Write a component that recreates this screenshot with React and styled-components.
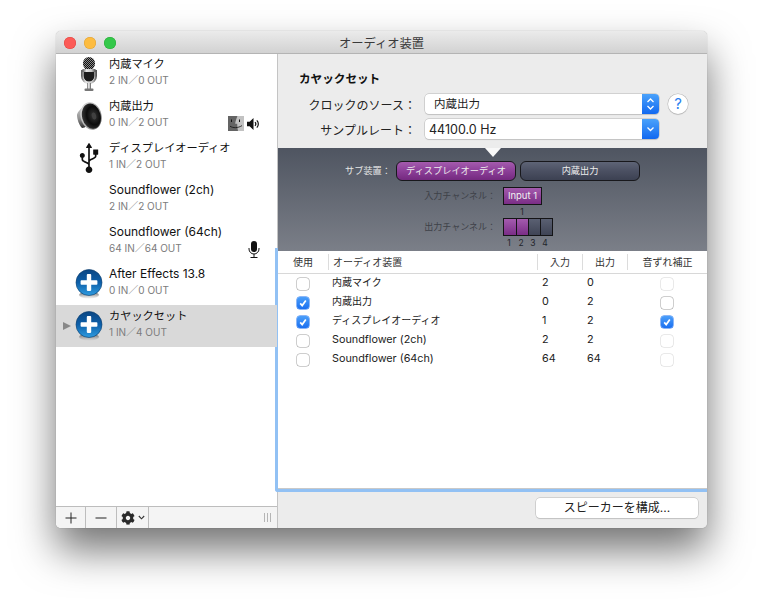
import React from 'react'
import styled, { createGlobalStyle } from 'styled-components'
import { FaCog, FaUsb } from 'react-icons/fa'

const FONT = `Inter, "Noto Sans CJK JP", sans-serif`

const GlobalStyle = createGlobalStyle`
    html, body {
        margin: 0;
        padding: 0;
        background: #fff;
    }
    body {
        font-family: ${FONT};
        font-size: 11px;
        color: #222;
    }
`

const devices = [
    { name: '内蔵マイク', io: '2 IN／0 OUT', icon: 'mic' },
    { name: '内蔵出力', io: '0 IN／2 OUT', icon: 'speaker', badges: 'output' },
    { name: 'ディスプレイオーディオ', io: '1 IN／2 OUT', icon: 'usb' },
    { name: 'Soundflower (2ch)', io: '2 IN／2 OUT' },
    { name: 'Soundflower (64ch)', io: '64 IN／64 OUT', badges: 'mic' },
    { name: 'After Effects 13.8', io: '0 IN／0 OUT', icon: 'plus' },
    { name: 'カヤックセット', io: '1 IN／4 OUT', icon: 'plus', selected: true }
]

const tableRows = [
    { name: '内蔵マイク', input: 2, output: 0, use: false, drift: false, driftDim: true },
    { name: '内蔵出力', input: 0, output: 2, use: true, drift: false },
    { name: 'ディスプレイオーディオ', input: 1, output: 2, use: true, drift: true },
    { name: 'Soundflower (2ch)', input: 2, output: 2, use: false, drift: false, driftDim: true },
    { name: 'Soundflower (64ch)', input: 64, output: 64, use: false, drift: false, driftDim: true }
]

// japanese glyphs run smaller than the latin ones in the original
const isCjk = text => /[^\x00-\x7f]/.test(text)

const MicIcon = () => (
    <svg width="18" height="35" viewBox="0 0 18 35">
        <defs>
            <linearGradient id="micBody" x1="0" x2="1" y1="0" y2="0">
                <stop offset="0" stopColor="#555" />
                <stop offset=".3" stopColor="#e6e6e6" />
                <stop offset=".7" stopColor="#c4c4c4" />
                <stop offset="1" stopColor="#4a4a4a" />
            </linearGradient>
            <pattern id="micMesh" width="2" height="2" patternUnits="userSpaceOnUse">
                <rect width="2" height="2" fill="#8c8c8c" />
                <rect width="1" height="1" fill="#111" />
                <rect x="1" y="1" width="1" height="1" fill="#111" />
            </pattern>
        </defs>
        <path d="M1 13v6a8 8 0 0 0 16 0v-6h-2v6a6 6 0 0 1-12 0v-6z" fill="url(#micBody)" />
        <rect x="3" y="0" width="12" height="13" rx="6" fill="url(#micMesh)" />
        <rect x="2.5" y="12" width="13" height="3" fill="url(#micBody)" />
        <path d="M3.5 15h11v4a5.5 5.5 0 0 1-11 0z" fill="#1c1c1c" />
        <rect x="7" y="26" width="4" height="7" fill="url(#micBody)" />
        <rect x="4.5" y="31.5" width="9" height="2.5" rx="1" fill="#777" />
    </svg>
)

const SpeakerIcon = () => (
    <svg width="27" height="29" viewBox="0 0 27 29">
        <defs>
            <radialGradient id="cone" cx=".62" cy=".5" r=".6">
                <stop offset="0" stopColor="#4a4a4a" />
                <stop offset=".18" stopColor="#2a2a2a" />
                <stop offset=".6" stopColor="#0c0c0c" />
                <stop offset="1" stopColor="#333" />
            </radialGradient>
            <linearGradient id="rim" x1="0" x2="1" y1="0" y2="1">
                <stop offset="0" stopColor="#e6e6e6" />
                <stop offset=".55" stopColor="#a8a8a8" />
                <stop offset="1" stopColor="#5a5a5a" />
            </linearGradient>
            <linearGradient id="back" x1="0" x2="0" y1="0" y2="1">
                <stop offset="0" stopColor="#cfcfcf" />
                <stop offset=".6" stopColor="#8d8d8d" />
                <stop offset="1" stopColor="#2f2f2f" />
            </linearGradient>
        </defs>
        <path d="M1 13c0-2 3-6 7-9l3 20c-2 1-3 2-5 2-3-3-5-9-5-13z" fill="url(#back)" />
        <ellipse cx="15" cy="14" rx="10.5" ry="14" fill="url(#rim)" transform="rotate(-14 15 14)" />
        <ellipse cx="15.4" cy="14.2" rx="9.3" ry="12.8" fill="url(#cone)" transform="rotate(-14 15.4 14.2)" />
        <ellipse cx="18" cy="14" rx="2.2" ry="3.6" fill="#404040" transform="rotate(-14 18 14)" />
    </svg>
)

const PlusIcon = () => (
    <svg width="28" height="30" viewBox="0 0 28 30">
        <defs>
            <linearGradient id="ball" x1="0" x2="0" y1="0" y2="1">
                <stop offset="0" stopColor="#0b4683" />
                <stop offset=".5" stopColor="#0d5fa9" />
                <stop offset="1" stopColor="#2f9ce0" />
            </linearGradient>
            <linearGradient id="ballShadow" x1="0" x2="0" y1="0" y2="1">
                <stop offset="0" stopColor="#444" />
                <stop offset="1" stopColor="#bbb" stopOpacity=".2" />
            </linearGradient>
        </defs>
        <ellipse cx="14" cy="26" rx="10" ry="3.5" fill="url(#ballShadow)" />
        <circle cx="14" cy="13.5" r="13" fill="url(#ball)" stroke="#0a3a69" strokeWidth=".6" />
        <rect x="5.6" y="11.3" width="16.8" height="4.4" rx=".8" fill="#fff" />
        <rect x="11.8" y="5.1" width="4.4" height="16.8" rx=".8" fill="#fff" />
    </svg>
)

const FinderBadge = () => (
    <svg width="16" height="15" viewBox="0 0 16 15">
        <rect width="16" height="15" fill="#c2c2c2" />
        <path d="M0 0h9.4C8.2 3 7.4 5.5 7.2 7.8h2c0 2.6.3 5 .8 7.2H0z" fill="#646464" />
        <path d="M3.5 3.5V6M11.5 3.5V6" stroke="#111" />
        <path d="M2 10.2c3 2 8 2 12-.6" stroke="#111" strokeWidth=".8" fill="none" />
    </svg>
)

const VolumeBadge = () => (
    <svg width="15" height="14" viewBox="0 0 15 14">
        <path d="M1 4.8h2.6L7.5 1v12L3.6 9.2H1z" fill="#111" />
        <path d="M9 5.2a2.6 2.6 0 0 1 0 3.6M10.8 3.4a5 5 0 0 1 0 7.2" stroke="#111" strokeWidth="1.2" fill="none" />
    </svg>
)

const SmallMic = () => (
    <svg width="12" height="17" viewBox="0 0 12 17">
        <rect x="3" y="0" width="6" height="11" rx="3" fill="#111" />
        <path d="M1 7v1a5 5 0 0 0 10 0V7" stroke="#111" fill="none" />
        <path d="M6 13v3M2.5 16.5h7" stroke="#111" />
    </svg>
)

const renderDeviceIcon = icon => {
    if (icon === 'mic') return <MicIcon />
    if (icon === 'speaker') return <SpeakerIcon />
    if (icon === 'usb') return <UsbGlyph />
    if (icon === 'plus') return <PlusIcon />
    return null
}

const Check = ({ checked, dim }) => (
    <CheckBox $checked={checked} $dim={dim}>
        {checked && (
            <svg width="10" height="10" viewBox="0 0 10 10">
                <path d="M2.2 5.4 4.2 7.6 7.8 2.4" stroke="#fff" strokeWidth="1.7" fill="none" />
            </svg>
        )}
    </CheckBox>
)

const Select = ({ children, stepper }) => (
    <SelectBox>
        <SelectValue $stepper={stepper}>{children}</SelectValue>
        <SelectArrow>
            {stepper ? (
                <svg width="9" height="14" viewBox="0 0 9 14">
                    <path d="M1.5 5 4.5 2l3 3M1.5 9l3 3 3-3" stroke="#fff" strokeWidth="1.3" fill="none" />
                </svg>
            ) : (
                <svg width="9" height="6" viewBox="0 0 9 6">
                    <path d="M1.5 1.5 4.5 4.5l3-3" stroke="#fff" strokeWidth="1.3" fill="none" />
                </svg>
            )}
        </SelectArrow>
    </SelectBox>
)

export default function App() {
    return (
        <Page>
            <GlobalStyle />
            <Window>
                <TitleBar>
                    <Lights>
                        <Light $color="#fc5b57" $edge="#e0443e" />
                        <Light $color="#fdbc40" $edge="#dea034" />
                        <Light $color="#34c84a" $edge="#27aa35" />
                    </Lights>
                    オーディオ装置
                </TitleBar>
                <Body>
                    <Sidebar>
                        <DeviceList>
                            {devices.map(device => (
                                <DeviceRow key={device.name} $selected={device.selected}>
                                    <Disclosure $visible={device.selected} />
                                    <DeviceIcon>{renderDeviceIcon(device.icon)}</DeviceIcon>
                                    <DeviceText>
                                        <DeviceName $cjk={isCjk(device.name)}>{device.name}</DeviceName>
                                        <DeviceIo>{device.io}</DeviceIo>
                                    </DeviceText>
                                    {device.badges === 'output' && (
                                        <Badges>
                                            <FinderBadge />
                                            <VolumeBadge />
                                        </Badges>
                                    )}
                                    {device.badges === 'mic' && (
                                        <MicBadge>
                                            <SmallMic />
                                        </MicBadge>
                                    )}
                                </DeviceRow>
                            ))}
                        </DeviceList>
                        <SideToolbar>
                            <ToolButton $width={30}>
                                <svg width="12" height="12" viewBox="0 0 12 12">
                                    <path d="M6 .5v11M.5 6h11" stroke="#222" />
                                </svg>
                            </ToolButton>
                            <ToolButton $width={31}>
                                <svg width="12" height="12" viewBox="0 0 12 12">
                                    <path d="M.5 6h11" stroke="#222" />
                                </svg>
                            </ToolButton>
                            <ToolButton $width={32}>
                                <FaCog size={14} color="#2a2a2a" />
                                <svg width="7" height="5" viewBox="0 0 7 5">
                                    <path d="M.8 1 3.5 3.8 6.2 1" stroke="#333" strokeWidth="1.1" fill="none" />
                                </svg>
                            </ToolButton>
                            <Grip>
                                <i /><i /><i />
                            </Grip>
                        </SideToolbar>
                    </Sidebar>
                    <Main>
                        <Settings>
                            <SettingsTitle>カヤックセット</SettingsTitle>
                            <SettingRow>
                                <SettingLabel>クロックのソース：</SettingLabel>
                                <Select stepper>内蔵出力</Select>
                                <HelpButton>?</HelpButton>
                            </SettingRow>
                            <SettingRow>
                                <SettingLabel>サンプルレート：</SettingLabel>
                                <Select>44100.0 Hz</Select>
                            </SettingRow>
                        </Settings>
                        <SubPanel>
                            <Notch />
                            <SubRow>
                                <SubLabel $bright $width={113}>サブ装置：</SubLabel>
                                <Segment $active>ディスプレイオーディオ</Segment>
                                <Segment>内蔵出力</Segment>
                            </SubRow>
                            <ChannelRow $top={6}>
                                <SubLabel $width={218}>入力チャンネル：</SubLabel>
                                <ChannelBox>
                                    <ChannelCell $active $width={37}>Input 1</ChannelCell>
                                </ChannelBox>
                            </ChannelRow>
                            <ChannelNumbers $offset={13}>
                                <span>1</span>
                            </ChannelNumbers>
                            <ChannelRow $top={0}>
                                <SubLabel $width={218}>出力チャンネル：</SubLabel>
                                <ChannelBox>
                                    <ChannelCell $active $width={12} />
                                    <ChannelCell $active $width={12} />
                                    <ChannelCell $width={12} />
                                    <ChannelCell $width={12} />
                                </ChannelBox>
                            </ChannelRow>
                            <ChannelNumbers>
                                <span>1</span>
                                <span>2</span>
                                <span>3</span>
                                <span>4</span>
                            </ChannelNumbers>
                        </SubPanel>
                        <TableFrame>
                            <HeaderRow>
                                <HeadCell $center $width={50}>使用</HeadCell>
                                <HeadCell $sep $width={209}>オーディオ装置</HeadCell>
                                <HeadCell $sep $center $width={45}>入力</HeadCell>
                                <HeadCell $sep $center $width={45}>出力</HeadCell>
                                <HeadCell $sep $center $width={80}>音ずれ補正</HeadCell>
                            </HeaderRow>
                            {tableRows.map(row => (
                                <TableRow key={row.name}>
                                    <UseCell><Check checked={row.use} /></UseCell>
                                    <NameCell $cjk={isCjk(row.name)}>{row.name}</NameCell>
                                    <NumCell>{row.input}</NumCell>
                                    <NumCell>{row.output}</NumCell>
                                    <DriftCell><Check checked={row.drift} dim={row.driftDim} /></DriftCell>
                                </TableRow>
                            ))}
                        </TableFrame>
                        <Footer>
                            <FooterButton>スピーカーを構成...</FooterButton>
                        </Footer>
                    </Main>
                </Body>
            </Window>
        </Page>
    )
}

const UsbGlyph = styled(FaUsb).attrs({ size: 30 })`
    color: #111;
    transform: rotate(-90deg);
`

const Page = styled.div`
    width: 763px;
    height: 608px;
    padding: 31px 0 0 56px;
    box-sizing: border-box;
    overflow: hidden;
`

const Window = styled.div`
    width: 651px;
    height: 497px;
    border-radius: 5px;
    background: #ececec;
    box-shadow: 0 0 1px rgba(0, 0, 0, .4), 0 22px 40px rgba(0, 0, 0, .55);
    display: flex;
    flex-direction: column;
    overflow: hidden;
`

const TitleBar = styled.div`
    position: relative;
    height: 22px;
    flex: none;
    text-align: center;
    line-height: 25px;
    font-size: 12.3px;
    color: #3a3a3a;
    background: linear-gradient(#ebebeb, #d2d2d2);
    border-bottom: 1px solid #b4b4b4;
`

const Lights = styled.div`
    position: absolute;
    left: 8px;
    top: 6px;
    display: flex;
    gap: 8px;
`

const Light = styled.span`
    width: 12px;
    height: 12px;
    border-radius: 50%;
    background: ${p => p.$color};
    box-shadow: inset 0 0 0 .5px ${p => p.$edge};
`

const Body = styled.div`
    flex: 1;
    display: flex;
    min-height: 0;
`

const Sidebar = styled.div`
    width: 222px;
    flex: none;
    display: flex;
    flex-direction: column;
    background: #fff;
    border-right: 1px solid #c4c4c4;
    box-sizing: border-box;
`

const DeviceList = styled.div`
    flex: 1;
    overflow: hidden;
`

const DeviceRow = styled.div`
    position: relative;
    height: 42px;
    display: flex;
    align-items: center;
    background: ${p => (p.$selected ? '#d9d9d9' : 'transparent')};
    &:first-child {
        margin-top: -1px;
    }
`

const Disclosure = styled.span`
    width: 0;
    height: 0;
    margin-left: 7px;
    flex: none;
    border-left: 8px solid ${p => (p.$visible ? '#888' : 'transparent')};
    border-top: 4.5px solid transparent;
    border-bottom: 4.5px solid transparent;
`

const DeviceIcon = styled.div`
    width: 32px;
    margin-left: 2px;
    height: 42px;
    flex: none;
    display: flex;
    align-items: center;
    justify-content: center;
`

const DeviceText = styled.div`
    margin-left: 4px;
    display: flex;
    flex-direction: column;
    gap: 1px;
    margin-top: -5px;
`

const DeviceName = styled.div`
    font-size: ${p => (p.$cjk ? 11.2 : 12)}px;
    line-height: 16px;
    color: #111;
`

const DeviceIo = styled.div`
    font-size: 10px;
    line-height: 14px;
    color: #7c7c7c;
`

const Badges = styled.div`
    position: absolute;
    left: 172px;
    top: 21px;
    display: flex;
    align-items: center;
    gap: 2px;
`

const MicBadge = styled.div`
    position: absolute;
    left: 192px;
    top: 20px;
`

const SideToolbar = styled.div`
    height: 21px;
    flex: none;
    display: flex;
    background: #f4f4f4;
    border-top: 1px solid #bdbdbd;
`

const ToolButton = styled.div`
    width: ${p => p.$width}px;
    flex: none;
    box-sizing: border-box;
    display: flex;
    align-items: center;
    justify-content: center;
    gap: 3px;
    border-right: 1px solid #bdbdbd;
`

const Grip = styled.div`
    margin-left: auto;
    margin-right: 6px;
    display: flex;
    align-items: center;
    gap: 2px;
    i {
        width: 1px;
        height: 9px;
        background: #b5b5b5;
    }
`

const Main = styled.div`
    flex: 1;
    min-width: 0;
    display: flex;
    flex-direction: column;
`

const Settings = styled.div`
    height: 94px;
    flex: none;
    box-sizing: border-box;
    padding: 17px 0 0 21px;
    background: #ececec;
`

const SettingsTitle = styled.div`
    font-size: 11.6px;
    font-weight: 700;
    line-height: 16px;
    color: #111;
    margin-bottom: 7px;
`

const SettingRow = styled.div`
    display: flex;
    align-items: center;
    height: 20px;
    margin-bottom: 5px;
`

const SettingLabel = styled.div`
    width: 118px;
    margin-right: 9px;
    margin-left: -1px;
    text-align: right;
    font-size: 12px;
    color: #222;
    white-space: nowrap;
`

const SelectBox = styled.div`
    width: 234px;
    height: 20px;
    box-sizing: border-box;
    display: flex;
    background: #fff;
    border-radius: 4px;
    box-shadow: 0 0 0 .5px #b5b5b5, 0 1px 1px rgba(0, 0, 0, .12);
    overflow: hidden;
`

const SelectValue = styled.div`
    flex: 1;
    padding-left: ${p => (p.$stepper ? 9 : 4)}px;
    font-size: ${p => (p.$stepper ? 11.5 : 12.5)}px;
    line-height: 21px;
    color: #222;
`

const SelectArrow = styled.div`
    width: 17px;
    flex: none;
    display: flex;
    align-items: center;
    justify-content: center;
    background: linear-gradient(#4aa2fb, #1269f0);
`

const HelpButton = styled.div`
    width: 20px;
    height: 20px;
    margin-left: 9px;
    border-radius: 50%;
    background: #fff;
    box-shadow: 0 0 0 .5px #b5b5b5, 0 1px 1px rgba(0, 0, 0, .15);
    text-align: center;
    font-size: 15px;
    line-height: 20px;
    color: #2a7ff0;
`

const SubPanel = styled.div`
    position: relative;
    z-index: 1;
    height: 103px;
    flex: none;
    box-sizing: border-box;
    padding-top: 13px;
    background: linear-gradient(#4f5561, #7b7f88);
`

const Notch = styled.div`
    position: absolute;
    left: 207px;
    top: 0;
    width: 0;
    height: 0;
    border-left: 8.5px solid transparent;
    border-right: 8.5px solid transparent;
    border-top: 9px solid #f8f8f8;
`

const SubRow = styled.div`
    display: flex;
    align-items: center;
    gap: 4px;
`

const SubLabel = styled.div`
    width: ${p => p.$width}px;
    flex: none;
    text-align: right;
    font-size: ${p => (p.$bright ? 9.2 : 9)}px;
    line-height: 12px;
    white-space: nowrap;
    color: ${p => (p.$bright ? '#e6e6e6' : '#3e4148')};
    margin-right: ${p => (p.$bright ? 1 : 3)}px;
`

const Segment = styled.div`
    width: 120px;
    height: 20px;
    box-sizing: border-box;
    border: 1px solid #18181c;
    border-radius: 6px;
    text-align: center;
    font-size: 9.2px;
    line-height: 18px;
    color: #eee;
    background: ${p => (p.$active
        ? 'linear-gradient(#a45bae 0, #8c3f98 50%, #74297f 100%)'
        : 'linear-gradient(#5e6476 0, #4b5062 50%, #3c4152 100%)')};
`

const ChannelRow = styled.div`
    display: flex;
    align-items: center;
    margin-top: ${p => p.$top}px;
`

const ChannelBox = styled.div`
    display: flex;
    flex: none;
    margin-left: 4px;
    border: 1px solid #141416;
`

const ChannelCell = styled.div`
    width: ${p => p.$width}px;
    height: 16px;
    box-sizing: border-box;
    text-align: center;
    font-size: 9.5px;
    line-height: 16px;
    color: #f2f2f2;
    background: ${p => (p.$active
        ? 'linear-gradient(#a45bae, #7a2d86)'
        : 'linear-gradient(#5a6072, #3f4455)')};
    & + & {
        border-left: 1px solid #141416;
    }
`

const ChannelNumbers = styled.div`
    display: flex;
    margin-left: ${p => 225 + (p.$offset || 0)}px;
    height: 13px;
    font-size: 8.5px;
    line-height: 14px;
    color: #23252b;
    span {
        width: 12px;
        text-align: center;
    }
`

const TableFrame = styled.div`
    flex: 1;
    min-height: 0;
    background: #fff;
    box-sizing: border-box;
    margin: -3px 0 0 -3px;
    padding-top: 3px;
    border-left: 3px solid #92c1f4;
    border-bottom: 3px solid #92c1f4;
    border-bottom-left-radius: 3px;
    box-shadow: inset 0 -1px 0 #c9c9c9;
`

const HeaderRow = styled.div`
    display: flex;
    align-items: center;
    height: 23px;
    box-sizing: border-box;
    border-bottom: 1px solid #d8d8d8;
`

const HeadCell = styled.div`
    width: ${p => p.$width}px;
    height: 16px;
    flex: none;
    box-sizing: border-box;
    padding-left: ${p => (p.$center ? 0 : 4)}px;
    text-align: ${p => (p.$center ? 'center' : 'left')};
    font-size: 10px;
    line-height: 16px;
    color: #333;
    border-left: ${p => (p.$sep ? '1px solid #dcdcdc' : 'none')};
`

const TableRow = styled.div`
    display: flex;
    align-items: center;
    height: 19px;
    font-size: 10.8px;
    line-height: 16px;
    color: #222;
    &:nth-child(2) {
        margin-top: -1px;
    }
`

const UseCell = styled.div`
    width: 50px;
    flex: none;
    display: flex;
    justify-content: center;
    padding-top: 3px;
`

const NameCell = styled.div`
    width: 209px;
    flex: none;
    padding-left: 4px;
    box-sizing: border-box;
    font-size: ${p => (p.$cjk ? 10 : 10.8)}px;
    margin-top: ${p => (p.$cjk ? -2 : 0)}px;
`

const NumCell = styled.div`
    width: 45px;
    flex: none;
    padding-left: 5px;
    box-sizing: border-box;
`

const DriftCell = styled.div`
    width: 80px;
    flex: none;
    display: flex;
    justify-content: center;
    padding-top: 3px;
`

const CheckBox = styled.span`
    width: 12px;
    height: 12px;
    display: flex;
    align-items: center;
    justify-content: center;
    border-radius: 3px;
    background: ${p => (p.$checked ? 'linear-gradient(#4b9ffa, #1a6ff0)' : '#fff')};
    box-shadow: 0 0 0 .5px ${p => (p.$checked ? '#1a6ff0' : p.$dim ? '#d4d4d4' : '#9d9d9d')};
`

const Footer = styled.div`
    height: 36px;
    flex: none;
    box-sizing: border-box;
    display: flex;
    justify-content: flex-end;
    align-items: flex-start;
    padding: 6px 9px 0 0;
    background: #ececec;
`

const FooterButton = styled.div`
    width: 162px;
    height: 20px;
    border-radius: 4px;
    background: #fff;
    box-shadow: 0 0 0 .5px #b5b5b5, 0 1px 1px rgba(0, 0, 0, .12);
    text-align: center;
    font-size: 12px;
    line-height: 20px;
    color: #222;
`
